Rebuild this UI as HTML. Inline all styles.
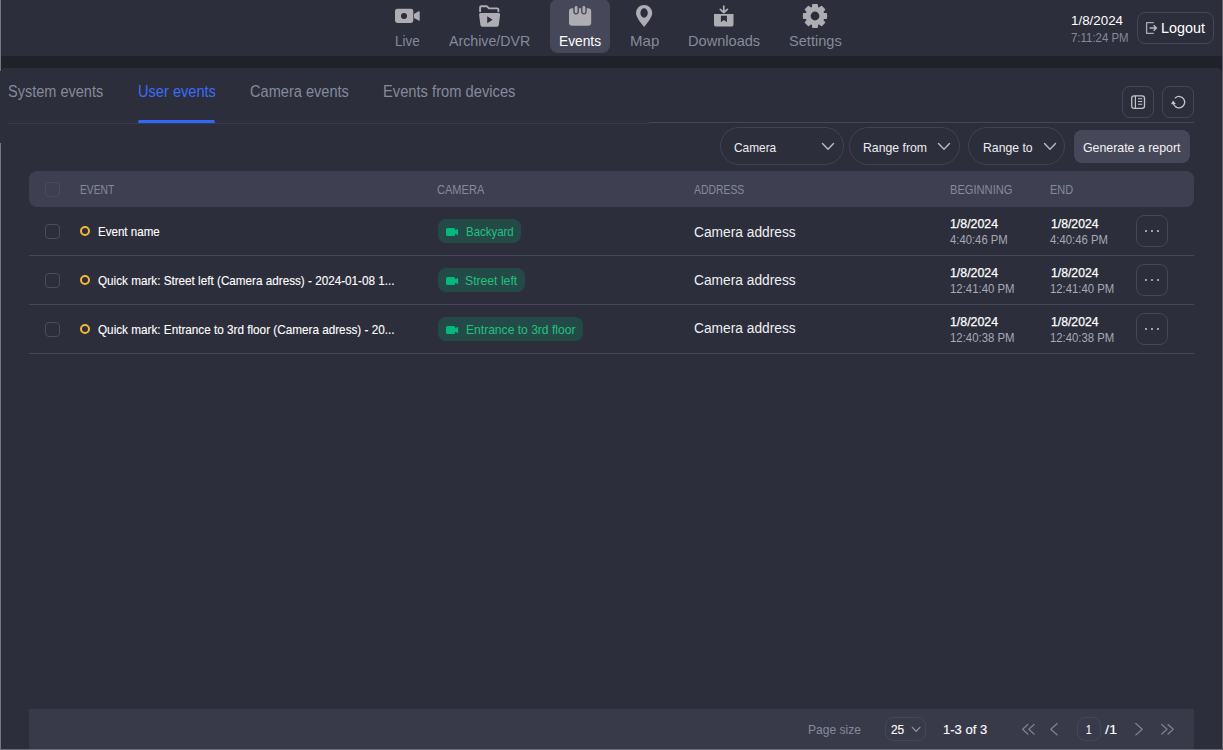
<!DOCTYPE html>
<html lang="en">
<head>
<meta charset="utf-8">
<title>Events</title>
<style>
*{box-sizing:border-box;margin:0;padding:0}
html,body{width:1223px;height:750px;overflow:hidden;background:#1f212b;}
body{font-family:"Liberation Sans",sans-serif;color:#fff;position:relative;font-size:13px;}
.abs{position:absolute}
.t{position:absolute;white-space:pre;line-height:1;transform-origin:0 0;}
svg{position:absolute;overflow:visible}
#edgeL1{left:0;top:0;width:1px;height:71px;background:#77757f}
#edgeL2{left:0;top:143px;width:1px;height:607px;background:#77757f}
#edgeB{left:0;top:749px;width:1223px;height:1px;background:#6d6c78}
#edgeR{left:1222px;top:0;width:1px;height:750px;background:#605f6c}
#header{left:1px;top:0;width:1221px;height:56px;background:#2c2e3b}
#panel{left:0;top:68px;width:1222px;height:681px;background:#2c2e3b;border-radius:5px 5px 0 0}
.navbg{left:550px;top:-1.5px;width:60px;height:54.5px;border-radius:8px;background:#464859}
.ico{width:24px;height:24px;top:4px;fill:#adadb3}
.btn{border:1px solid #44475a;border-radius:8px}
.pill{border:1px solid #414355;border-radius:19px;top:127px;height:38px}
.chev{fill:none;stroke:#b9bac3;stroke-width:1.4;stroke-linecap:round;stroke-linejoin:round}
.cb{left:45px;width:15px;height:15px;border:1px solid #4b4d60;border-radius:4px}
.ring{left:80px;width:10px;height:10px;border:2px solid #f4b73e;border-radius:50%}
.tag{left:438px;height:24px;border-radius:8px;background:#244a48}
.rowline{left:29px;width:1165px;height:1px;background:#44475a}
.more{left:1136px;width:32px;height:32px}
.dot{width:1.8px;height:1.8px;border-radius:50%;background:#c4c5cd}
.pg{fill:none;stroke:#7d8090;stroke-width:1.3;stroke-linecap:round;stroke-linejoin:round}
</style>
</head>
<body>
<div class="abs" id="header"></div>
<div class="abs" id="panel"></div>
<div class="abs" id="edgeL1"></div><div class="abs" id="edgeL2"></div><div class="abs" id="edgeB"></div><div class="abs" id="edgeR"></div>

<header>
<nav>
<div class="abs navbg"></div>

<svg class="ico" style="left:395px" viewBox="0 0 24 24"><path fill-rule="evenodd" d="M2.4 4.8 H15.9 A2.4 2.4 0 0 1 18.3 7.2 V16.6 A2.4 2.4 0 0 1 15.9 19 H2.4 A2.4 2.4 0 0 1 0 16.6 V7.2 A2.4 2.4 0 0 1 2.4 4.8 Z M9 9 A3 3 0 1 0 9 15 A3 3 0 1 0 9 9 Z"/><path d="M19 9.9 L23.6 7.3 Q24.7 6.8 24.7 8 V15.9 Q24.7 17.1 23.6 16.6 L19 14.1 Z"/></svg>
<svg class="ico" style="left:477px" viewBox="0 0 24 24"><path d="M3.1 7.2 V3.6 A1.3 1.3 0 0 1 4.4 2.3 H9.3 Q10 2.3 10.5 2.8 L12 4.4 H20.1 A1.3 1.3 0 0 1 21.4 5.7 V7.2" fill="none" stroke="#adadb3" stroke-width="1.9" stroke-linecap="round" stroke-linejoin="round"/><path fill-rule="evenodd" d="M3.6 9 H21.6 Q23.3 9 23.1 10.7 L21.8 21 Q21.6 22.7 19.9 22.7 H5.3 Q3.6 22.7 3.4 21 L2.1 10.7 Q1.9 9 3.6 9 Z M10.2 12.2 V19.2 L15.6 15.7 Z"/></svg>
<svg class="ico" style="left:568px" viewBox="0 0 24 24"><rect x="1" y="4.3" width="22.2" height="17.4" rx="3.2"/><rect x="5.3" y="0" width="5.6" height="10.4" rx="2.8" fill="#464859"/><rect x="13.1" y="0" width="5.6" height="10.4" rx="2.8" fill="#464859"/><rect x="6.7" y="2" width="2.8" height="7.2" rx="1.4"/><rect x="14.5" y="2" width="2.8" height="7.2" rx="1.4"/></svg>
<svg class="ico" style="left:632px" viewBox="0 0 24 24"><path fill-rule="evenodd" d="M12.1 0.9 A8.1 8.1 0 0 1 20.2 9 C20.2 13.2 15.6 18.6 12.1 23 C8.6 18.6 4 13.2 4 9 A8.1 8.1 0 0 1 12.1 0.9 Z M12.1 4.3 A3.7 4.7 0 1 0 12.1 13.7 A3.7 4.7 0 1 0 12.1 4.3 Z"/></svg>
<svg class="ico" style="left:712px" viewBox="0 0 24 24"><path fill-rule="evenodd" d="M2 10 H21.5 V20.4 A2.2 2.2 0 0 1 19.3 22.6 H4.2 A2.2 2.2 0 0 1 2 20.4 Z M8.9 11.8 V18.2 L11.9 16 L14.9 18.2 V11.8 Z"/><path d="M11.8 2 V8.3 M8.3 5.3 L11.8 8.5 L15.4 5.3" fill="none" stroke="#adadb3" stroke-width="1.7" stroke-linecap="round" stroke-linejoin="round"/></svg>
<svg class="ico" style="left:802.6px;top:4.4px" viewBox="0 0 24 24"><path fill-rule="evenodd" stroke="#adadb3" stroke-width="1.6" stroke-linejoin="round" d="M9.68 3.62 L9.90 0.69 L14.10 0.69 L14.32 3.62 L16.28 4.43 L18.51 2.52 L21.48 5.49 L19.57 7.72 L20.38 9.68 L23.31 9.90 L23.31 14.10 L20.38 14.32 L19.57 16.28 L21.48 18.51 L18.51 21.48 L16.28 19.57 L14.32 20.38 L14.10 23.31 L9.90 23.31 L9.68 20.38 L7.72 19.57 L5.49 21.48 L2.52 18.51 L4.43 16.28 L3.62 14.32 L0.69 14.10 L0.69 9.90 L3.62 9.68 L4.43 7.72 L2.52 5.49 L5.49 2.52 L7.72 4.43Z M12 6.8 A5.2 5.2 0 1 0 12 17.2 A5.2 5.2 0 1 0 12 6.8 Z"/></svg>

<div class="t" style="left:395.3px;top:33.0px;font-size:15px;color:#858a9c;transform:scaleX(0.9016)">Live</div>
<div class="t" style="left:449.3px;top:33.0px;font-size:15px;color:#858a9c;transform:scaleX(0.9452)">Archive/DVR</div>
<div class="t" style="left:559.1px;top:33.0px;font-size:15px;color:#ffffff;transform:scaleX(0.9166)">Events</div>
<div class="t" style="left:629.8px;top:33.0px;font-size:15px;color:#858a9c;transform:scaleX(1.0040)">Map</div>
<div class="t" style="left:687.9px;top:33.0px;font-size:15px;color:#858a9c;transform:scaleX(0.9725)">Downloads</div>
<div class="t" style="left:788.8px;top:33.0px;font-size:15px;color:#858a9c;transform:scaleX(0.9737)">Settings</div>
</nav>

<div class="abs btn" style="left:1137px;top:12px;width:77px;height:32px"></div>
<svg style="left:1145px;top:21px" width="14" height="14" viewBox="0 0 14 14"><path d="M8.8 1.7 H1.6 V12.4 H8.8" fill="none" stroke="#a9a9b0" stroke-width="1.3" stroke-linejoin="round"/><path d="M4.6 7 H10.6 M8.6 4.3 L11.4 7 L8.6 9.7" fill="none" stroke="#b9b9bf" stroke-width="1.5" stroke-linejoin="round"/></svg>
<div class="t" style="left:1071.2px;top:14.0px;font-size:13px;color:#ffffff;transform:scaleX(1.0279)">1/8/2024</div>
<div class="t" style="left:1071.2px;top:32.0px;font-size:12.5px;color:#858a9c;transform:scaleX(0.9146)">7:11:24 PM</div>
<div class="t" style="left:1161.3px;top:21.0px;font-size:14.5px;color:#ffffff;transform:scaleX(0.9895)">Logout</div>
</header>
<main>

<!-- tabs -->
<div class="abs" style="left:8px;top:123px;width:641px;height:1px;background:#393b4b"></div>
<div class="abs" style="left:649px;top:122px;width:545px;height:1px;background:#44475a"></div>
<div class="abs" style="left:138px;top:119.5px;width:77.2px;height:3px;border-radius:1.5px;background:#2f69fa"></div>
<div class="abs btn" style="left:1122px;top:86px;width:32px;height:32px"></div>
<div class="abs btn" style="left:1162px;top:86px;width:32px;height:32px"></div>
<svg style="left:1131px;top:95px" width="14" height="14" viewBox="0 0 14 14"><rect x="0.7" y="0.8" width="12.8" height="12.6" rx="2.4" fill="none" stroke="#c3c3c9" stroke-width="1.3"/><path d="M4.4 1 V13.2" stroke="#c3c3c9" stroke-width="1.2"/><path d="M7 3.7 H11.3 M7 6.5 H11.3 M7 9.3 H11.3" stroke="#c3c3c9" stroke-width="1.1"/></svg>
<svg style="left:1171px;top:95px" width="16" height="15" viewBox="0 0 16 15"><path d="M4.2 2.9 A5.7 5.7 0 1 1 2.3 7.6" fill="none" stroke="#c6c6cc" stroke-width="1.3" stroke-linecap="round"/><path d="M0 9.3 L2.1 5.6 L4.8 9 Z" fill="#c6c6cc"/></svg>
<div class="t" style="left:8.4px;top:84.0px;font-size:16px;color:#858a9c;transform:scaleX(0.9075)">System events</div>
<div class="t" style="left:137.6px;top:84.0px;font-size:16px;color:#3a6cf6;transform:scaleX(0.9128)">User events</div>
<div class="t" style="left:249.9px;top:84.0px;font-size:16px;color:#858a9c;transform:scaleX(0.9109)">Camera events</div>
<div class="t" style="left:383.1px;top:84.0px;font-size:16px;color:#858a9c;transform:scaleX(0.9193)">Events from devices</div>

<!-- filters -->
<div class="abs pill" style="left:720px;width:124px"></div>
<div class="abs pill" style="left:849px;width:111px"></div>
<div class="abs pill" style="left:968px;width:97px"></div>
<svg style="left:822px;top:143px" width="12" height="7"><path class="chev" d="M0.5 0.5 L6 6.3 L11.5 0.5"/></svg>
<svg style="left:938px;top:143px" width="12" height="7"><path class="chev" d="M0.5 0.5 L6 6.3 L11.5 0.5"/></svg>
<svg style="left:1043.5px;top:143px" width="12" height="7"><path class="chev" d="M0.5 0.5 L6 6.3 L11.5 0.5"/></svg>
<div class="abs" style="left:1074px;top:130px;width:116px;height:33px;border-radius:8px;background:#464859"></div>

<div class="t" style="left:733.6px;top:141.0px;font-size:13px;color:#ececf0;transform:scaleX(0.9131)">Camera</div>
<div class="t" style="left:863.1px;top:141.0px;font-size:13px;color:#ececf0;transform:scaleX(0.9431)">Range from</div>
<div class="t" style="left:983.0px;top:141.0px;font-size:13px;color:#ececf0;transform:scaleX(0.9410)">Range to</div>
<div class="t" style="left:1083.3px;top:141.0px;font-size:13px;color:#f2f2f5;transform:scaleX(0.9497)">Generate a report</div>

<!-- table -->
<div class="abs" style="left:29px;top:171px;width:1165px;height:36px;border-radius:8px;background:#3e4052"></div>
<div class="abs cb" style="top:182px;border-color:#4a4c5e"></div>
<div class="abs cb" style="top:224px"></div>
<div class="abs cb" style="top:273px"></div>
<div class="abs cb" style="top:322px"></div>
<div class="abs ring" style="top:226px"></div>
<div class="abs ring" style="top:275px"></div>
<div class="abs ring" style="top:324px"></div>
<div class="abs tag" style="top:219px;width:83px"></div>
<div class="abs tag" style="top:268px;width:87px"></div>
<div class="abs tag" style="top:317px;width:145px"></div>
<svg style="left:446px;top:227.9px" width="13" height="9" viewBox="0 0 13 9"><path fill="#06b87c" d="M1.6 0 H7.6 A1.6 1.6 0 0 1 9.2 1.6 V2.6 L11.3 1.1 Q12.1 0.6 12.1 1.5 V6.6 Q12.1 7.5 11.3 7 L9.2 5.5 V6.5 A1.6 1.6 0 0 1 7.6 8.1 H1.6 A1.6 1.6 0 0 1 0 6.5 V1.6 A1.6 1.6 0 0 1 1.6 0 Z"/></svg>
<svg style="left:446px;top:276.9px" width="13" height="9" viewBox="0 0 13 9"><path fill="#06b87c" d="M1.6 0 H7.6 A1.6 1.6 0 0 1 9.2 1.6 V2.6 L11.3 1.1 Q12.1 0.6 12.1 1.5 V6.6 Q12.1 7.5 11.3 7 L9.2 5.5 V6.5 A1.6 1.6 0 0 1 7.6 8.1 H1.6 A1.6 1.6 0 0 1 0 6.5 V1.6 A1.6 1.6 0 0 1 1.6 0 Z"/></svg>
<svg style="left:446px;top:325.9px" width="13" height="9" viewBox="0 0 13 9"><path fill="#06b87c" d="M1.6 0 H7.6 A1.6 1.6 0 0 1 9.2 1.6 V2.6 L11.3 1.1 Q12.1 0.6 12.1 1.5 V6.6 Q12.1 7.5 11.3 7 L9.2 5.5 V6.5 A1.6 1.6 0 0 1 7.6 8.1 H1.6 A1.6 1.6 0 0 1 0 6.5 V1.6 A1.6 1.6 0 0 1 1.6 0 Z"/></svg>
<div class="abs rowline" style="top:255px"></div>
<div class="abs rowline" style="top:304px"></div>
<div class="abs rowline" style="top:353px"></div>
<div class="abs btn more" style="top:215px"></div>
<div class="abs btn more" style="top:264px"></div>
<div class="abs btn more" style="top:313px"></div>
<div class="abs dot" style="left:1145.3px;top:230.1px"></div><div class="abs dot" style="left:1151.1px;top:230.1px"></div><div class="abs dot" style="left:1156.9px;top:230.1px"></div><div class="abs dot" style="left:1145.3px;top:279.1px"></div><div class="abs dot" style="left:1151.1px;top:279.1px"></div><div class="abs dot" style="left:1156.9px;top:279.1px"></div><div class="abs dot" style="left:1145.3px;top:328.1px"></div><div class="abs dot" style="left:1151.1px;top:328.1px"></div><div class="abs dot" style="left:1156.9px;top:328.1px"></div>
<div class="t" style="left:80.2px;top:184.0px;font-size:12.5px;color:#858a9c;transform:scaleX(0.8218)">EVENT</div>
<div class="t" style="left:437.2px;top:184.0px;font-size:12.5px;color:#858a9c;transform:scaleX(0.8845)">CAMERA</div>
<div class="t" style="left:693.8px;top:184.0px;font-size:12.5px;color:#858a9c;transform:scaleX(0.8317)">ADDRESS</div>
<div class="t" style="left:950.2px;top:184.0px;font-size:12.5px;color:#858a9c;transform:scaleX(0.8896)">BEGINNING</div>
<div class="t" style="left:1050.1px;top:184.0px;font-size:12.5px;color:#858a9c;transform:scaleX(0.8748)">END</div>
<div class="t" style="left:98.3px;top:225.0px;font-size:13px;color:#ffffff;transform:scaleX(0.8895);-webkit-text-stroke:0.12px #ffffff">Event name</div>
<div class="t" style="left:97.9px;top:274.0px;font-size:13px;color:#ffffff;transform:scaleX(0.9000);-webkit-text-stroke:0.12px #ffffff">Quick mark: Street left (Camera adress) - 2024-01-08 1...</div>
<div class="t" style="left:97.9px;top:323.0px;font-size:13px;color:#ffffff;transform:scaleX(0.9020);-webkit-text-stroke:0.12px #ffffff">Quick mark: Entrance to 3rd floor (Camera adress) - 20...</div>
<div class="t" style="left:465.7px;top:225.0px;font-size:13px;color:#21c27c;transform:scaleX(0.8801)">Backyard</div>
<div class="t" style="left:465.3px;top:274.0px;font-size:13px;color:#21c27c;transform:scaleX(0.9373)">Street left</div>
<div class="t" style="left:465.7px;top:323.0px;font-size:13px;color:#21c27c;transform:scaleX(0.9291)">Entrance to 3rd floor</div>
<div class="t" style="left:694.1px;top:225.0px;font-size:14px;color:#f0f0f3;transform:scaleX(0.9825)">Camera address</div>
<div class="t" style="left:694.1px;top:273.0px;font-size:14px;color:#f0f0f3;transform:scaleX(0.9825)">Camera address</div>
<div class="t" style="left:694.1px;top:321.0px;font-size:14px;color:#f0f0f3;transform:scaleX(0.9825)">Camera address</div>
<div class="t" style="left:950.2px;top:218.0px;font-size:12px;color:#ffffff;transform:scaleX(1.0279);-webkit-text-stroke:0.25px #ffffff">1/8/2024</div>
<div class="t" style="left:1050.6px;top:218.0px;font-size:12px;color:#ffffff;transform:scaleX(1.0170);-webkit-text-stroke:0.25px #ffffff">1/8/2024</div>
<div class="t" style="left:950.2px;top:234.0px;font-size:12px;color:#a6a9b6;transform:scaleX(0.9410)">4:40:46 PM</div>
<div class="t" style="left:1050.4px;top:234.0px;font-size:12px;color:#a6a9b6;transform:scaleX(0.9443)">4:40:46 PM</div>
<div class="t" style="left:950.2px;top:267.0px;font-size:12px;color:#ffffff;transform:scaleX(1.0279);-webkit-text-stroke:0.25px #ffffff">1/8/2024</div>
<div class="t" style="left:1050.6px;top:267.0px;font-size:12px;color:#ffffff;transform:scaleX(1.0170);-webkit-text-stroke:0.25px #ffffff">1/8/2024</div>
<div class="t" style="left:950.2px;top:283.0px;font-size:12px;color:#a6a9b6;transform:scaleX(0.9487)">12:41:40 PM</div>
<div class="t" style="left:1050.4px;top:283.0px;font-size:12px;color:#a6a9b6;transform:scaleX(0.9443)">12:41:40 PM</div>
<div class="t" style="left:950.2px;top:316.0px;font-size:12px;color:#ffffff;transform:scaleX(1.0279);-webkit-text-stroke:0.25px #ffffff">1/8/2024</div>
<div class="t" style="left:1050.6px;top:316.0px;font-size:12px;color:#ffffff;transform:scaleX(1.0170);-webkit-text-stroke:0.25px #ffffff">1/8/2024</div>
<div class="t" style="left:950.2px;top:332.0px;font-size:12px;color:#a6a9b6;transform:scaleX(0.9487)">12:40:38 PM</div>
<div class="t" style="left:1050.4px;top:332.0px;font-size:12px;color:#a6a9b6;transform:scaleX(0.9443)">12:40:38 PM</div>
</main>

<footer>
<div class="abs" style="left:29px;top:709px;width:1165px;height:40px;background:#383a4a"></div>
<div class="abs btn" style="left:885px;top:717px;width:41px;height:24px"></div>
<div class="abs btn" style="left:1077px;top:717px;width:24px;height:24px"></div>
<svg style="left:912px;top:727px" width="8" height="5"><path class="chev" style="stroke:#9396a3;stroke-width:1.2" d="M0.3 0.3 L4.1 4.3 L7.9 0.3"/></svg>
<svg style="left:1022px;top:724px" width="13" height="11"><path class="pg" d="M5.8 0.5 L0.6 5.3 L5.8 10.1 M12 0.5 L6.8 5.3 L12 10.1"/></svg>
<svg style="left:1050px;top:723px" width="8" height="13"><path class="pg" d="M7.2 0.5 L0.8 6.2 L7.2 11.9"/></svg>
<svg style="left:1135px;top:723px" width="8" height="13"><path class="pg" d="M0.8 0.5 L7.2 6.2 L0.8 11.9"/></svg>
<svg style="left:1161px;top:724px" width="13" height="11"><path class="pg" d="M0.8 0.5 L6 5.3 L0.8 10.1 M7 0.5 L12.2 5.3 L7 10.1"/></svg>

<div class="t" style="left:808.1px;top:723.0px;font-size:13px;color:#858a9c;transform:scaleX(0.9291)">Page size</div>
<div class="t" style="left:890.6px;top:723.0px;font-size:13px;color:#ffffff;transform:scaleX(0.9145);-webkit-text-stroke:0.12px #ffffff">25</div>
<div class="t" style="left:942.6px;top:723.0px;font-size:13px;color:#ffffff;transform:scaleX(1.0025);-webkit-text-stroke:0.12px #ffffff">1-3 of 3</div>
<div class="t" style="left:1085.9px;top:723.0px;font-size:13px;color:#ffffff;transform:scaleX(0.7615);-webkit-text-stroke:0.12px #ffffff">1</div>
<div class="t" style="left:1105.1px;top:723.0px;font-size:13px;color:#ffffff;transform:scaleX(1.1350);-webkit-text-stroke:0.12px #ffffff">/1</div>
</footer>
</body>
</html>
